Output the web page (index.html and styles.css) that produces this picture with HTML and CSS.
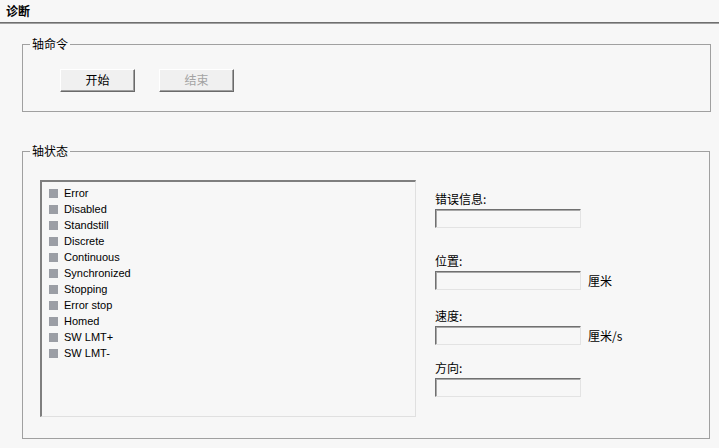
FILE: index.html
```html
<!DOCTYPE html>
<html>
<head>
<meta charset="utf-8">
<link rel="stylesheet" href="styles.css">
</head>
<body>
<div class="header">诊断</div>

<div class="group group-cmd">
  <span class="group-label">轴命令</span>
  <div class="btn-row">
    <div class="btn">开始</div>
    <div class="btn btn-disabled">结束</div>
  </div>
</div>

<div class="group group-state">
  <span class="group-label">轴状态</span>
  <div class="state-row">
    <div class="listbox">
      <div class="item"><span class="sq"></span>Error</div>
      <div class="item"><span class="sq"></span>Disabled</div>
      <div class="item"><span class="sq"></span>Standstill</div>
      <div class="item"><span class="sq"></span>Discrete</div>
      <div class="item"><span class="sq"></span>Continuous</div>
      <div class="item"><span class="sq"></span>Synchronized</div>
      <div class="item"><span class="sq"></span>Stopping</div>
      <div class="item"><span class="sq"></span>Error stop</div>
      <div class="item"><span class="sq"></span>Homed</div>
      <div class="item"><span class="sq"></span>SW LMT+</div>
      <div class="item"><span class="sq"></span>SW LMT-</div>
    </div>
    <div class="fields">
      <div class="field f1">
        <div class="flabel">错误信息:</div>
        <div class="frow"><div class="input"></div></div>
      </div>
      <div class="field f2">
        <div class="flabel">位置:</div>
        <div class="frow"><div class="input"></div><span class="unit">厘米</span></div>
      </div>
      <div class="field f3">
        <div class="flabel">速度:</div>
        <div class="frow"><div class="input"></div><span class="unit">厘米/s</span></div>
      </div>
      <div class="field f4">
        <div class="flabel">方向:</div>
        <div class="frow"><div class="input"></div></div>
      </div>
    </div>
  </div>
</div>
</body>
</html>
```

FILE: styles.css
```css
* { box-sizing: border-box; }
html, body { margin: 0; padding: 0; }
body {
  width: 719px;
  height: 448px;
  overflow: hidden;
  background: #f7f7f7;
  color: #000;
  font-family: "Noto Sans CJK SC", "Liberation Sans", sans-serif;
  font-size: 12px;
}
.header {
  height: 24px;
  padding-left: 6px;
  font-weight: bold;
  font-size: 12px;
  line-height: 22px;
  border-bottom: 1px solid #a0a0a0;
  box-shadow: inset 0 -1px 0 #6f6f6f;
}
.group {
  position: relative;
  margin-left: 22px;
  width: 688px;
  border: 1px solid #a0a0a0;
}
.group-label {
  position: absolute;
  left: 7px;
  top: -9px;
  padding: 0 2px;
  background: #f7f7f7;
  line-height: 16px;
  font-size: 12px;
}
.group-cmd {
  margin-top: 20px;
  width: 689px;
  height: 68px;
  padding: 24px 0 0 37px;
}
.btn-row {
  display: flex;
  gap: 24px;
}
.btn {
  width: 75px;
  height: 23px;
  background: #f0f0f0;
  border-top: 1px solid #ffffff;
  border-left: 1px solid #ffffff;
  border-right: 1px solid #6a6a6a;
  border-bottom: 1px solid #6a6a6a;
  box-shadow: inset -1px -1px 0 #a0a0a0;
  text-align: center;
  line-height: 20px;
  font-size: 12px;
}
.btn-disabled { color: #a3a3a3; }
.group-state {
  margin-top: 39px;
  height: 288px;
  padding: 28px 0 0 17px;
}
.state-row {
  display: flex;
  align-items: flex-start;
}
.listbox {
  width: 376px;
  height: 237px;
  border-top: 2px solid #7f7f7f;
  border-left: 2px solid #7f7f7f;
  border-right: 1px solid #e0e0e0;
  border-bottom: 1px solid #e0e0e0;
  padding: 3px 0 0 7px;
  font-family: "Liberation Sans", "Noto Sans", sans-serif;
  font-size: 11px;
}
.item {
  display: flex;
  align-items: center;
  height: 16px;
  color: #000;
}
.sq {
  width: 9px;
  height: 9px;
  background: #9b9ea5;
  margin-right: 6px;
  flex: none;
}
.fields {
  margin-left: 19px;
  padding-top: 12px;
  display: flex;
  flex-direction: column;
}
.field {
  display: flex;
  flex-direction: column;
  gap: 3px;
}
.f2 { margin-top: 26px; }
.f3 { margin-top: 19px; }
.f4 { margin-top: 16px; }
.flabel {
  line-height: 14px;
  height: 14px;
  font-size: 12px;
}
.frow {
  display: flex;
  align-items: center;
}
.input {
  width: 146px;
  height: 19px;
  background: #f7f7f7;
  border-top: 1px solid #707070;
  border-left: 1px solid #707070;
  border-right: 1px solid #e3e3e3;
  border-bottom: 1px solid #e3e3e3;
  box-shadow: inset 1px 1px 0 #a8a8a8;
}
.unit {
  margin-left: 7px;
  font-size: 12px;
  line-height: 14px;
}
```
